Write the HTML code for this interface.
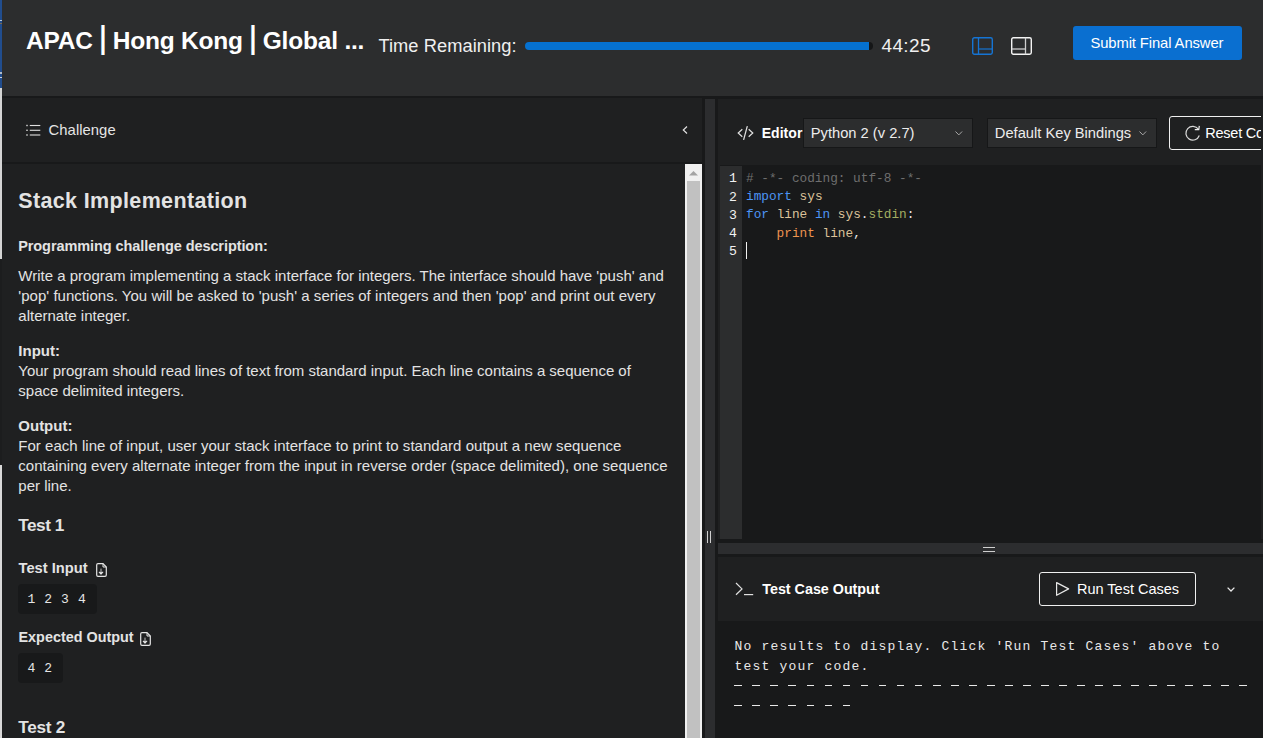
<!DOCTYPE html>
<html><head><meta charset="utf-8">
<style>
*{box-sizing:border-box;margin:0;padding:0}
html,body{width:1263px;height:738px;overflow:hidden;background:#18191a;font-family:"Liberation Sans",sans-serif;color:#e6e6e6}
.a{position:absolute;white-space:nowrap}
svg{position:absolute;overflow:visible}
</style></head><body>
<div class="a" style="left:0px;top:0px;width:1263px;height:96px;background:#2c2d2e;"></div>
<div class="a" style="left:26.00px;top:25px;font-size:24.5px;line-height:31px;font-weight:bold;color:#ffffff;font-family:'Liberation Sans', sans-serif;letter-spacing:-0.2px;">APAC <span style="display:inline-block;transform:translateY(0.8px) scaleY(1.244);transform-origin:50% 100%">|</span> Hong Kong <span style="display:inline-block;transform:translateY(0.8px) scaleY(1.244);transform-origin:50% 100%">|</span> Global ...</div>
<div class="a" style="left:378.40px;top:34px;font-size:18.3px;line-height:23px;font-weight:normal;color:#f0f0f0;font-family:'Liberation Sans', sans-serif;letter-spacing:0.05px;">Time Remaining:</div>
<div class="a" style="left:865px;top:42px;width:8px;height:8px;background:#151617;border-radius:4px"></div>
<div class="a" style="left:525px;top:42px;width:344px;height:8px;background:#0571d0;border-radius:4px 0 0 4px"></div>
<div class="a" style="left:881.50px;top:34px;font-size:19px;line-height:24px;font-weight:normal;color:#f0f0f0;font-family:'Liberation Sans', sans-serif;letter-spacing:0.35px;">44:25</div>
<svg style="left:972px;top:37px" width="21" height="18" viewBox="0 0 21 18">
  <rect x="0.7" y="0.7" width="19.6" height="16.6" rx="1.7" fill="none" stroke="#1574d4" stroke-width="1.4"/>
  <line x1="6.5" y1="0.7" x2="6.5" y2="17.3" stroke="#1574d4" stroke-width="1.3"/>
  <line x1="6.5" y1="12" x2="20.3" y2="12" stroke="#1574d4" stroke-width="1.2"/>
</svg>
<svg style="left:1011px;top:37px" width="21" height="18" viewBox="0 0 21 18">
  <rect x="0.7" y="0.7" width="19.6" height="16.6" rx="1.7" fill="none" stroke="#f4f4f4" stroke-width="1.4"/>
  <line x1="14.5" y1="0.7" x2="14.5" y2="17.3" stroke="#cfcfcf" stroke-width="1.3"/>
  <line x1="0.7" y1="12" x2="14.5" y2="12" stroke="#cfcfcf" stroke-width="1.3"/>
</svg>
<div class="a" style="left:1073px;top:26px;width:169px;height:34px;background:#0a6fd0;border-radius:3px"></div>
<div class="a" style="left:1090.40px;top:34px;font-size:14.8px;line-height:18px;font-weight:normal;color:#ffffff;font-family:'Liberation Sans', sans-serif;letter-spacing:-0.1px;">Submit Final Answer</div>
<div class="a" style="left:0px;top:0px;width:2px;height:88px;background:#214d8e;"></div>
<div class="a" style="left:0px;top:20px;width:2px;height:1.3px;background:#b8c8dc;"></div>
<div class="a" style="left:0px;top:23px;width:2px;height:1px;background:#7a6a50;"></div>
<div class="a" style="left:0px;top:72px;width:2px;height:2px;background:#b0bccc;"></div>
<div class="a" style="left:0px;top:76.5px;width:2px;height:1.5px;background:#c8d0dc;"></div>
<div class="a" style="left:0px;top:88px;width:2px;height:171px;background:#d4d4d4;"></div>
<div class="a" style="left:0px;top:259px;width:2px;height:206px;background:#1c1d1e;"></div>
<div class="a" style="left:0px;top:465px;width:2px;height:273px;background:#d9d9d9;"></div>
<div class="a" style="left:2px;top:98px;width:700px;height:640px;background:#1f2021;"></div>
<div class="a" style="left:2px;top:162px;width:700px;height:2px;background:#18191a;"></div>
<svg style="left:26px;top:124px" width="15" height="12" viewBox="0 0 15 12">
  <g stroke="#e0e0e0" stroke-width="1.1" fill="none">
  <line x1="3.8" y1="1.5" x2="14.3" y2="1.5"/><line x1="3.8" y1="6.3" x2="14.3" y2="6.3"/><line x1="3.8" y1="11" x2="14.3" y2="11"/>
  </g>
  <g fill="#e0e0e0"><rect x="0.3" y="0.8" width="1.4" height="1.4"/><rect x="0.3" y="5.6" width="1.4" height="1.4"/><rect x="0.3" y="10.3" width="1.4" height="1.4"/></g>
</svg>
<div class="a" style="left:48.60px;top:121px;font-size:14.8px;line-height:18px;font-weight:normal;color:#e5e5e5;font-family:'Liberation Sans', sans-serif;letter-spacing:0.05px;">Challenge</div>
<svg style="left:682px;top:126px" width="6" height="8" viewBox="0 0 6 8"><polyline points="5,0.5 1.3,4 5,7.5" fill="none" stroke="#e0e0e0" stroke-width="1.2"/></svg>
<div class="a" style="left:685px;top:164px;width:17px;height:574px;background:#f0f0f0;"></div>
<div class="a" style="left:687px;top:181px;width:13px;height:557px;background:#c1c1c1;"></div>
<svg style="left:689px;top:171px" width="9" height="5" viewBox="0 0 9 5"><polygon points="0,4.5 4.5,0 9,4.5" fill="#a3a3a3"/></svg>
<div class="a" style="left:18.30px;top:188px;font-size:21.5px;line-height:27px;font-weight:bold;color:#e3e3e3;font-family:'Liberation Sans', sans-serif;letter-spacing:0.35px;">Stack Implementation</div>
<div class="a" style="left:18.20px;top:237px;font-size:14.5px;line-height:18px;font-weight:bold;color:#e3e3e3;font-family:'Liberation Sans', sans-serif;letter-spacing:-0.08px;">Programming challenge description:</div>
<div class="a" style="left:18.30px;top:266px;font-size:15px;line-height:19px;font-weight:normal;color:#e3e3e3;font-family:'Liberation Sans', sans-serif;letter-spacing:0px;">Write a program implementing a stack interface for integers. The interface should have 'push' and</div>
<div class="a" style="left:18.30px;top:286px;font-size:15px;line-height:19px;font-weight:normal;color:#e3e3e3;font-family:'Liberation Sans', sans-serif;letter-spacing:0.03px;">'pop' functions. You will be asked to 'push' a series of integers and then 'pop' and print out every</div>
<div class="a" style="left:18.30px;top:306px;font-size:15px;line-height:19px;font-weight:normal;color:#e3e3e3;font-family:'Liberation Sans', sans-serif;letter-spacing:0px;">alternate integer.</div>
<div class="a" style="left:18.30px;top:361px;font-size:15px;line-height:19px;font-weight:normal;color:#e3e3e3;font-family:'Liberation Sans', sans-serif;letter-spacing:-0.025px;">Your program should read lines of text from standard input. Each line contains a sequence of</div>
<div class="a" style="left:18.30px;top:381px;font-size:15px;line-height:19px;font-weight:normal;color:#e3e3e3;font-family:'Liberation Sans', sans-serif;letter-spacing:0px;">space delimited integers.</div>
<div class="a" style="left:18.30px;top:436px;font-size:15px;line-height:19px;font-weight:normal;color:#e3e3e3;font-family:'Liberation Sans', sans-serif;letter-spacing:0.03px;">For each line of input, user your stack interface to print to standard output a new sequence</div>
<div class="a" style="left:18.30px;top:456px;font-size:15px;line-height:19px;font-weight:normal;color:#e3e3e3;font-family:'Liberation Sans', sans-serif;letter-spacing:0.016px;">containing every alternate integer from the input in reverse order (space delimited), one sequence</div>
<div class="a" style="left:18.30px;top:476px;font-size:15px;line-height:19px;font-weight:normal;color:#e3e3e3;font-family:'Liberation Sans', sans-serif;letter-spacing:0px;">per line.</div>
<div class="a" style="left:18.30px;top:341px;font-size:15px;line-height:19px;font-weight:bold;color:#e3e3e3;font-family:'Liberation Sans', sans-serif;letter-spacing:0px;">Input:</div>
<div class="a" style="left:18.30px;top:416px;font-size:15px;line-height:19px;font-weight:bold;color:#e3e3e3;font-family:'Liberation Sans', sans-serif;letter-spacing:0px;">Output:</div>
<div class="a" style="left:18.30px;top:514px;font-size:17.2px;line-height:22px;font-weight:bold;color:#e3e3e3;font-family:'Liberation Sans', sans-serif;letter-spacing:-0.5px;">Test 1</div>
<div class="a" style="left:18.50px;top:559px;font-size:14.7px;line-height:18px;font-weight:bold;color:#e3e3e3;font-family:'Liberation Sans', sans-serif;letter-spacing:0px;">Test Input</div>
<div class="a" style="left:18.50px;top:628px;font-size:14.4px;line-height:18px;font-weight:bold;color:#e3e3e3;font-family:'Liberation Sans', sans-serif;letter-spacing:0px;">Expected Output</div>
<div class="a" style="left:18.30px;top:716px;font-size:17.2px;line-height:22px;font-weight:bold;color:#e3e3e3;font-family:'Liberation Sans', sans-serif;letter-spacing:-0.3px;">Test 2</div>
<svg style="left:96px;top:563px" width="11" height="14" viewBox="0 0 11 14">
  <path d="M2 0.7 H7 L10.3 4 V12 Q10.3 13.3 9 13.3 H2 Q0.7 13.3 0.7 12 V2 Q0.7 0.7 2 0.7 Z" fill="none" stroke="#e5e5e5" stroke-width="1.2"/>
  <path d="M7 0.7 V4 H10.3" fill="none" stroke="#e5e5e5" stroke-width="1"/>
  <line x1="5" y1="5.6" x2="5" y2="8.6" stroke="#bdbdbd" stroke-width="1"/>
  <path d="M3.2 9.2 L5 11.1 L6.8 9.2 Z" fill="none" stroke="#e5e5e5" stroke-width="1.1" stroke-linejoin="round"/>
</svg>
<svg style="left:140px;top:632px" width="11" height="14" viewBox="0 0 11 14">
  <path d="M2 0.7 H7 L10.3 4 V12 Q10.3 13.3 9 13.3 H2 Q0.7 13.3 0.7 12 V2 Q0.7 0.7 2 0.7 Z" fill="none" stroke="#e5e5e5" stroke-width="1.2"/>
  <path d="M7 0.7 V4 H10.3" fill="none" stroke="#e5e5e5" stroke-width="1"/>
  <line x1="5" y1="5.6" x2="5" y2="8.6" stroke="#bdbdbd" stroke-width="1"/>
  <path d="M3.2 9.2 L5 11.1 L6.8 9.2 Z" fill="none" stroke="#e5e5e5" stroke-width="1.1" stroke-linejoin="round"/>
</svg>
<div class="a" style="left:18px;top:584px;width:79px;height:30px;background:#18191a;border-radius:4px"></div>
<div class="a" style="left:27.50px;top:592px;font-size:13px;line-height:16px;font-weight:normal;color:#e5e5e5;font-family:'Liberation Mono', monospace;letter-spacing:0.6px;">1 2 3 4</div>
<div class="a" style="left:18px;top:653px;width:45px;height:30px;background:#18191a;border-radius:4px"></div>
<div class="a" style="left:27.50px;top:661px;font-size:13px;line-height:16px;font-weight:normal;color:#e5e5e5;font-family:'Liberation Mono', monospace;letter-spacing:0.6px;">4 2</div>
<div class="a" style="left:705px;top:99px;width:10px;height:639px;background:#2c2d2f;"></div>
<div class="a" style="left:707px;top:531px;width:1.3px;height:12px;background:#cfcfcf;"></div>
<div class="a" style="left:710px;top:531px;width:1.3px;height:12px;background:#cfcfcf;"></div>
<div class="a" style="left:718px;top:99px;width:545px;height:440px;background:#1f2021;"></div>
<svg style="left:737px;top:126px" width="17" height="14" viewBox="0 0 17 14">
  <polyline points="5.3,3.2 1.2,7 5.3,10.8" fill="none" stroke="#e0e0e0" stroke-width="1.2"/>
  <polyline points="11.7,3.2 15.8,7 11.7,10.8" fill="none" stroke="#e0e0e0" stroke-width="1.2"/>
  <line x1="10.2" y1="0.5" x2="6.7" y2="13.5" stroke="#e0e0e0" stroke-width="1.2" stroke-linecap="round"/>
</svg>
<div class="a" style="left:761.70px;top:124px;font-size:14px;line-height:18px;font-weight:bold;color:#ffffff;font-family:'Liberation Sans', sans-serif;letter-spacing:0.05px;">Editor</div>
<div class="a" style="left:803px;top:118px;width:170px;height:30px;background:#2c2d2e;border:1px solid #161718"></div>
<div class="a" style="left:810.80px;top:124px;font-size:14.7px;line-height:18px;font-weight:normal;color:#ececec;font-family:'Liberation Sans', sans-serif;letter-spacing:0px;">Python 2 (v 2.7)</div>
<svg style="left:954.5px;top:130.5px" width="8" height="5" viewBox="0 0 8 5"><polyline points="0.5,0.5 3.8,3.9 7.1,0.5" fill="none" stroke="#a8a8a8" stroke-width="1"/></svg>
<div class="a" style="left:987px;top:118px;width:170px;height:30px;background:#2c2d2e;border:1px solid #161718"></div>
<div class="a" style="left:994.80px;top:124px;font-size:14.7px;line-height:18px;font-weight:normal;color:#ececec;font-family:'Liberation Sans', sans-serif;letter-spacing:0px;">Default Key Bindings</div>
<svg style="left:1138.7px;top:130.5px" width="8" height="5" viewBox="0 0 8 5"><polyline points="0.5,0.5 3.8,3.9 7.1,0.5" fill="none" stroke="#a8a8a8" stroke-width="1"/></svg>
<div class="a" style="left:1169px;top:116px;width:92px;height:34px;overflow:hidden"><div style="position:absolute;left:0;top:0;width:130px;height:34px;border:1.5px solid #f0f0f0;border-radius:3px"></div></div>
<svg style="left:1185px;top:125px" width="16" height="16" viewBox="0 0 16 16">
  <path d="M13.4 4.2 A6.9 6.9 0 1 0 14.3 10.5" fill="none" stroke="#d8d8d8" stroke-width="1.2"/>
  <polyline points="9.8,4.6 13.8,4.6 14.3,0.8" fill="none" stroke="#f0f0f0" stroke-width="1.2"/>
</svg>
<div class="a" style="left:1160px;top:100px;width:101px;height:60px;overflow:hidden">
<div class="a" style="left:45.30px;top:24px;font-size:14.5px;line-height:18px;font-weight:normal;color:#ffffff;font-family:'Liberation Sans', sans-serif;letter-spacing:-0.25px;">Reset Code</div>
</div>
<div class="a" style="left:720px;top:165px;width:541px;height:374px;background:#18191a;"></div>
<div class="a" style="left:720px;top:166px;width:22px;height:373px;background:#2c2d2e;"></div>
<div class="a" style="left:729.00px;top:171px;font-size:13.2px;line-height:16px;font-weight:normal;color:#f2f2f2;font-family:'Liberation Mono', monospace;letter-spacing:0px;width:8px;text-align:right">1</div>
<div class="a" style="left:729.00px;top:190px;font-size:13.2px;line-height:16px;font-weight:normal;color:#f2f2f2;font-family:'Liberation Mono', monospace;letter-spacing:0px;width:8px;text-align:right">2</div>
<div class="a" style="left:729.00px;top:208px;font-size:13.2px;line-height:16px;font-weight:normal;color:#f2f2f2;font-family:'Liberation Mono', monospace;letter-spacing:0px;width:8px;text-align:right">3</div>
<div class="a" style="left:729.00px;top:226px;font-size:13.2px;line-height:16px;font-weight:normal;color:#f2f2f2;font-family:'Liberation Mono', monospace;letter-spacing:0px;width:8px;text-align:right">4</div>
<div class="a" style="left:729.00px;top:244px;font-size:13.2px;line-height:16px;font-weight:normal;color:#f2f2f2;font-family:'Liberation Mono', monospace;letter-spacing:0px;width:8px;text-align:right">5</div>
<div class="a" style="left:746.00px;top:171px;font-size:12.75px;line-height:16px;font-weight:normal;color:#e8e8e8;font-family:'Liberation Mono', monospace;letter-spacing:0px;white-space:pre"><span style="color:#6e6e6e"># -*- coding: utf-8 -*-</span></div>
<div class="a" style="left:746.00px;top:189px;font-size:12.75px;line-height:16px;font-weight:normal;color:#e8e8e8;font-family:'Liberation Mono', monospace;letter-spacing:0px;white-space:pre"><span style="color:#4d95f5">import</span> <span style="color:#dcc39a">sys</span></div>
<div class="a" style="left:746.00px;top:207px;font-size:12.75px;line-height:16px;font-weight:normal;color:#e8e8e8;font-family:'Liberation Mono', monospace;letter-spacing:0px;white-space:pre"><span style="color:#4d95f5">for</span> <span style="color:#dcc39a">line</span> <span style="color:#4d95f5">in</span> <span style="color:#dcc39a">sys</span><span style="color:#e8e8e8">.</span><span style="color:#a3ae62">stdin</span><span style="color:#e8e8e8">:</span></div>
<div class="a" style="left:746.00px;top:226px;font-size:12.75px;line-height:16px;font-weight:normal;color:#e8e8e8;font-family:'Liberation Mono', monospace;letter-spacing:0px;white-space:pre">    <span style="color:#ee9450">print</span> <span style="color:#dcc39a">line</span><span style="color:#e8e8e8">,</span></div>
<div class="a" style="left:746.00px;top:244px;font-size:12.75px;line-height:16px;font-weight:normal;color:#e8e8e8;font-family:'Liberation Mono', monospace;letter-spacing:0px;white-space:pre"></div>
<div class="a" style="left:745.5px;top:242px;width:1.2px;height:17px;background:#f0f0f0;"></div>
<div class="a" style="left:718px;top:543px;width:545px;height:11px;background:#2c2d2f;"></div>
<div class="a" style="left:983px;top:547px;width:12px;height:1.2px;background:#cfcfcf;"></div>
<div class="a" style="left:983px;top:550.5px;width:12px;height:1.2px;background:#cfcfcf;"></div>
<div class="a" style="left:718px;top:557px;width:545px;height:64px;background:#1f2021;"></div>
<svg style="left:735px;top:582px" width="19" height="14" viewBox="0 0 19 14">
  <polyline points="1,1 7,6.9 1,12.8" fill="none" stroke="#e0e0e0" stroke-width="1.2"/>
  <line x1="9" y1="12.6" x2="18.2" y2="12.6" stroke="#e0e0e0" stroke-width="1.2"/>
</svg>
<div class="a" style="left:762.30px;top:580px;font-size:14.3px;line-height:18px;font-weight:bold;color:#ffffff;font-family:'Liberation Sans', sans-serif;letter-spacing:0px;">Test Case Output</div>
<div class="a" style="left:1039px;top:572px;width:157px;height:34px;background:transparent;border:1.5px solid #f0f0f0;border-radius:3px"></div>
<svg style="left:1055px;top:581px" width="16" height="16" viewBox="0 0 16 16">
  <path d="M1.6 1.6 L13.6 7.9 L1.6 14.3 Z" fill="none" stroke="#e8e8e8" stroke-width="1.2" stroke-linejoin="round"/>
</svg>
<div class="a" style="left:1077.00px;top:580px;font-size:14.5px;line-height:18px;font-weight:normal;color:#ffffff;font-family:'Liberation Sans', sans-serif;letter-spacing:0px;">Run Test Cases</div>
<svg style="left:1226.5px;top:586.5px" width="8" height="5" viewBox="0 0 8 5"><polyline points="0.6,0.6 4,4 7.4,0.6" fill="none" stroke="#e8e8e8" stroke-width="1.3"/></svg>
<div class="a" style="left:734.50px;top:639px;font-size:13px;line-height:16px;font-weight:normal;color:#e8e8e8;font-family:'Liberation Mono', monospace;letter-spacing:1.2px;">No results to display. Click 'Run Test Cases' above to</div>
<div class="a" style="left:734.50px;top:659px;font-size:13px;line-height:16px;font-weight:normal;color:#e8e8e8;font-family:'Liberation Mono', monospace;letter-spacing:1.2px;">test your code.</div>
<div class="a" style="left:734.4px;top:685px;width:7.8px;height:1.3px;background:#e8e8e8;"></div>
<div class="a" style="left:752.43px;top:685px;width:7.8px;height:1.3px;background:#e8e8e8;"></div>
<div class="a" style="left:770.46px;top:685px;width:7.8px;height:1.3px;background:#e8e8e8;"></div>
<div class="a" style="left:788.49px;top:685px;width:7.8px;height:1.3px;background:#e8e8e8;"></div>
<div class="a" style="left:806.52px;top:685px;width:7.8px;height:1.3px;background:#e8e8e8;"></div>
<div class="a" style="left:824.55px;top:685px;width:7.8px;height:1.3px;background:#e8e8e8;"></div>
<div class="a" style="left:842.58px;top:685px;width:7.8px;height:1.3px;background:#e8e8e8;"></div>
<div class="a" style="left:860.61px;top:685px;width:7.8px;height:1.3px;background:#e8e8e8;"></div>
<div class="a" style="left:878.64px;top:685px;width:7.8px;height:1.3px;background:#e8e8e8;"></div>
<div class="a" style="left:896.67px;top:685px;width:7.8px;height:1.3px;background:#e8e8e8;"></div>
<div class="a" style="left:914.7px;top:685px;width:7.8px;height:1.3px;background:#e8e8e8;"></div>
<div class="a" style="left:932.73px;top:685px;width:7.8px;height:1.3px;background:#e8e8e8;"></div>
<div class="a" style="left:950.76px;top:685px;width:7.8px;height:1.3px;background:#e8e8e8;"></div>
<div class="a" style="left:968.79px;top:685px;width:7.8px;height:1.3px;background:#e8e8e8;"></div>
<div class="a" style="left:986.82px;top:685px;width:7.8px;height:1.3px;background:#e8e8e8;"></div>
<div class="a" style="left:1004.85px;top:685px;width:7.8px;height:1.3px;background:#e8e8e8;"></div>
<div class="a" style="left:1022.88px;top:685px;width:7.8px;height:1.3px;background:#e8e8e8;"></div>
<div class="a" style="left:1040.91px;top:685px;width:7.8px;height:1.3px;background:#e8e8e8;"></div>
<div class="a" style="left:1058.94px;top:685px;width:7.8px;height:1.3px;background:#e8e8e8;"></div>
<div class="a" style="left:1076.97px;top:685px;width:7.8px;height:1.3px;background:#e8e8e8;"></div>
<div class="a" style="left:1095.0px;top:685px;width:7.8px;height:1.3px;background:#e8e8e8;"></div>
<div class="a" style="left:1113.03px;top:685px;width:7.8px;height:1.3px;background:#e8e8e8;"></div>
<div class="a" style="left:1131.06px;top:685px;width:7.8px;height:1.3px;background:#e8e8e8;"></div>
<div class="a" style="left:1149.09px;top:685px;width:7.8px;height:1.3px;background:#e8e8e8;"></div>
<div class="a" style="left:1167.12px;top:685px;width:7.8px;height:1.3px;background:#e8e8e8;"></div>
<div class="a" style="left:1185.15px;top:685px;width:7.8px;height:1.3px;background:#e8e8e8;"></div>
<div class="a" style="left:1203.18px;top:685px;width:7.8px;height:1.3px;background:#e8e8e8;"></div>
<div class="a" style="left:1221.21px;top:685px;width:7.8px;height:1.3px;background:#e8e8e8;"></div>
<div class="a" style="left:1239.24px;top:685px;width:7.8px;height:1.3px;background:#e8e8e8;"></div>
<div class="a" style="left:734.4px;top:705px;width:7.8px;height:1.3px;background:#e8e8e8;"></div>
<div class="a" style="left:752.43px;top:705px;width:7.8px;height:1.3px;background:#e8e8e8;"></div>
<div class="a" style="left:770.46px;top:705px;width:7.8px;height:1.3px;background:#e8e8e8;"></div>
<div class="a" style="left:788.49px;top:705px;width:7.8px;height:1.3px;background:#e8e8e8;"></div>
<div class="a" style="left:806.52px;top:705px;width:7.8px;height:1.3px;background:#e8e8e8;"></div>
<div class="a" style="left:824.55px;top:705px;width:7.8px;height:1.3px;background:#e8e8e8;"></div>
<div class="a" style="left:842.58px;top:705px;width:7.8px;height:1.3px;background:#e8e8e8;"></div>
</body></html>
